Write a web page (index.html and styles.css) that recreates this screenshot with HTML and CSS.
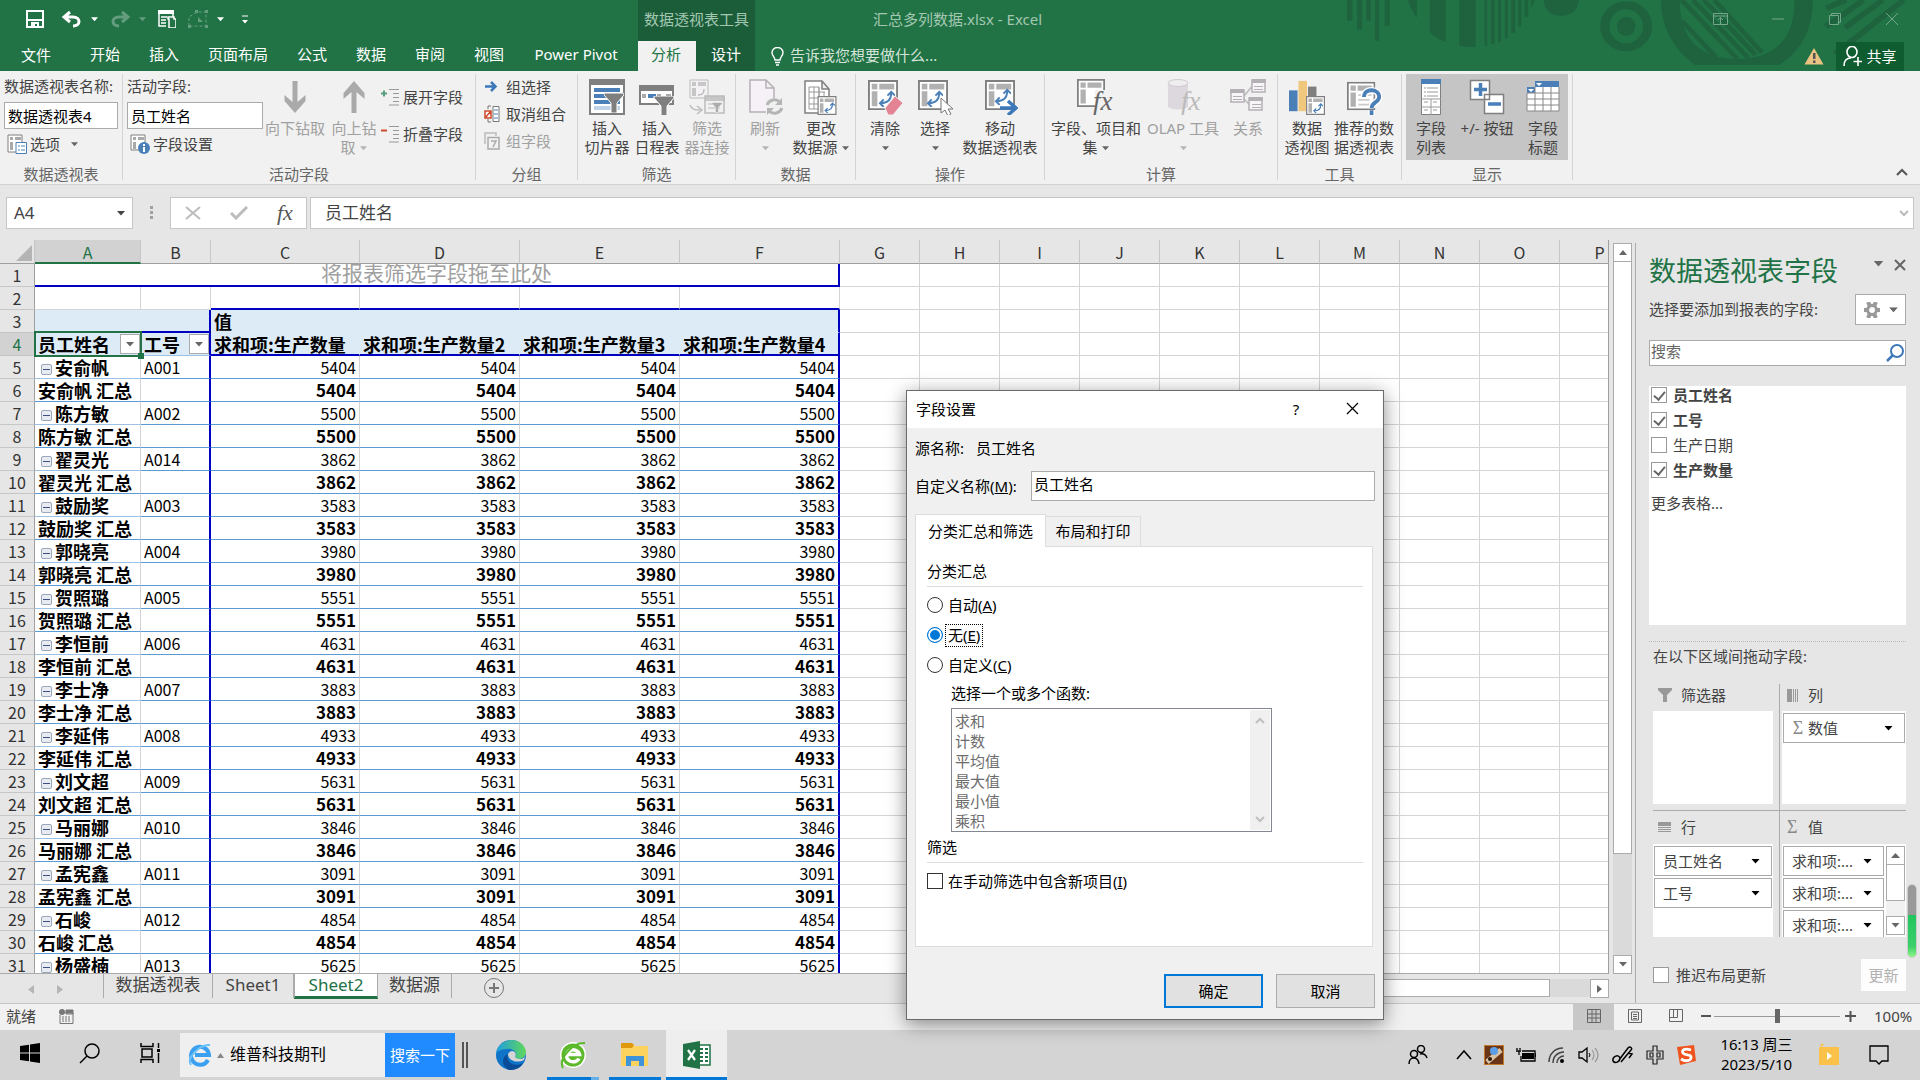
FILE: index.html
```html
<!DOCTYPE html>
<html lang="zh-CN">
<head>
<meta charset="utf-8">
<title>汇总多列数据.xlsx - Excel</title>
<link rel="stylesheet" href="styles.css">
</head>
<body>
<svg class="defs" width="0" height="0" aria-hidden="true">
  <symbol id="caret" viewBox="0 0 8 5"><path d="M0 0h8L4 4.500z" fill="currentColor"/></symbol>
  <symbol id="pivot" viewBox="0 0 32 32">
    <path d="M1 1h30v30H1z" fill="#fff" stroke="#7f7f7f" stroke-width="2"/>
    <path d="M4 4h6v6H4zM12 4h16v6H12zM4 12h6v16H4z" fill="#b1b1b1"/>
  </symbol>
  <symbol id="swap" viewBox="0 0 18 18">
    <path d="M3 14c7 0 11-3 11-11M10 6l4-4 4 4M6 10l-4 4 4 4" fill="none" stroke="#4a7fb8" stroke-width="2"/>
  </symbol>
  <symbol id="funnel" viewBox="0 0 20 20"><path d="M0 0h20v2l-7 8v10H7V10L0 2z" fill="#7f7f7f" stroke="#fff"/></symbol>
</svg>

<header class="title-area">
  <svg class="decor" viewBox="0 0 600 71" aria-hidden="true">
    <g transform="scale(.3827 .3333)" fill="#1e633e">
      <path d="M71 0h14v62H71zM97 0h13v89H97zM121 0h12v62h-12zM144 0h11v122h-11zM169 0h13v78h-13zM230 0h23v54q-16-25-23-54zM287 0h42v126q-22-8-42-28zM364 0h43v140q-22 2-43-3zM430 0h7v138h-7zM447 0h9v132h-9zM465 0h8v126h-8zM483 0h8v114h-8zM500 0h10v100h-10zM518 0h8v80h-8zM535 0h9v52h-9zM552 0h8q-2 14-8 24z"/>
      <path d="M584 0h93q-6 47-47 47T584 0z"/>
      <ellipse cx="800" cy="79" rx="56" ry="63" fill="none" stroke="#1e633e" stroke-width="24"/>
      <ellipse cx="800" cy="79" rx="24" ry="29"/>
      <path d="M891 0h49q0 175 150 177Q1240 175 1240 0h48q0 130-88 195H980Q891 120 891 0z"/>
      <path d="M945 0l145 176M975 0l143 173M1003 0l135 165M1030 0l125 158M945 62l90 110" stroke="#1e633e" stroke-width="13"/>
      <path d="M1375 0l-52 24M1420 0l-98 80M1470 0l-98 83M1525 0l-180 163" stroke="#1e633e" stroke-width="16"/>
    </g>
  </svg>
  <div class="title-row">
    <div class="quick">
      <svg width="18" height="18" viewBox="0 0 18 18"><path d="M1 1h16v16H1z" fill="none" stroke="#fff" stroke-width="2"/><path d="M2 9h14v2H2zM5 12h8v5h-2v-3H9v3H5z" fill="#fff"/></svg>
      <svg class="q2" width="20" height="18" viewBox="0 0 20 18"><path d="M8 2L2 7l6 5M2 7h9c8 0 8 9 0 9" fill="none" stroke="#fff" stroke-width="3"/></svg>
      <svg class="q3" width="7" height="5"><use href="#caret"/></svg>
      <svg class="q4 dim" width="20" height="18" viewBox="0 0 20 18"><path d="M12 2l6 5-6 5M18 7H9c-8 0-8 9 0 9" fill="none" stroke="#fff" stroke-width="3"/></svg>
      <svg class="q3 dim" width="7" height="5"><use href="#caret"/></svg>
      <svg class="q4" width="18" height="18" viewBox="0 0 18 18"><path d="M0 0h16v4H0z" fill="#fff"/><path d="M1 4v12h7M15 4v3M3 7h6M3 10h5M3 13h5" fill="none" stroke="#fff" stroke-width="1.500"/><path d="M10 7h6v2h2v9h-7V9h-1z" fill="none" stroke="#fff" stroke-width="1.500"/></svg>
      <svg class="q4 dim" width="20" height="18" viewBox="0 0 20 18"><path d="M1 16V7l8-5h9v14H1" fill="none" stroke="#fff" stroke-dasharray="3 2"/><path d="M7 0h3v3H7zM17 0h3v3h-3zM0 15h3v3H0zM17 15h3v3h-3zM10 7l5 5h-5z" fill="#fff"/></svg>
      <svg class="q3" width="7" height="5"><use href="#caret"/></svg>
      <svg class="q5" width="6" height="9" viewBox="0 0 6 9"><path d="M0 1h6" stroke="#fff"/><path d="M0 5h6L3 8.500z" fill="#fff"/></svg>
    </div>
    <div class="tool-title">数据透视表工具</div>
    <div class="doc-title">汇总多列数据.xlsx - Excel</div>
    <div class="win-buttons">
      <button aria-label="功能区显示选项"><svg width="15" height="12" viewBox="0 0 15 12"><path d="M.5.500h14v11H.5zM.5 3h14M7.500 11V5M5 7l2.500-2.500L10 7" fill="none" stroke="currentColor"/></svg></button>
      <button aria-label="最小化"><svg width="12" height="12"><path d="M0 6h12" stroke="currentColor"/></svg></button>
      <button aria-label="还原"><svg width="12" height="12" viewBox="0 0 12 12"><path d="M.5 2.500h9v9h-9zM2.500 2V.5h9v9H10" fill="none" stroke="currentColor"/></svg></button>
      <button aria-label="关闭"><svg width="12" height="12"><path d="M0 0l12 12M12 0L0 12" stroke="currentColor"/></svg></button>
    </div>
  </div>
  <nav class="tabs">
    <button class="file">文件</button><button>开始</button><button>插入</button><button>页面布局</button><button>公式</button><button>数据</button><button>审阅</button><button>视图</button><button class="pp">Power Pivot</button><button class="active">分析</button><button class="tool">设计</button>
    <label class="tell"><svg width="13" height="19" viewBox="0 0 13 19"><path d="M4 13c0-3-3-4-3-7.500a5.500 5 0 0 1 11 0C12 9 9 10 9 13zM4 15.500h5M5 18h3" fill="none" stroke="#fff" stroke-width="1.400"/></svg><input type="text" value="告诉我您想要做什么..." aria-label="告诉我"></label>
    <div class="account">
      <svg width="20" height="18" viewBox="0 0 20 18"><path d="M10 1l9.500 16.500H.5z" fill="#eac282"/><path d="M9 6h2.500v6H9zM9 13.500h2.500V16H9z" fill="#555"/></svg>
      <button class="share"><svg width="19" height="20" viewBox="0 0 19 20"><ellipse cx="9" cy="6" rx="5" ry="5.500" fill="none" stroke="#fff" stroke-width="1.600"/><path d="M1 20c0-5 2-8 7-8M15 11v9M10.500 15.500H19" fill="none" stroke="#fff" stroke-width="1.600"/></svg>共享</button>
    </div>
  </nav>
</header>

<section class="ribbon">
  <div class="group g1">
    <div class="body col">
      <label for="pname">数据透视表名称:</label>
      <input id="pname" type="text" value="数据透视表4">
      <button class="small"><svg width="20" height="20" viewBox="0 0 20 20"><path d="M1 1h14v17H1z" fill="#fff" stroke="#7f7f7f"/><path d="M3 3h3v3H3zM8 3h6v3H8zM3 8h3v8H3z" fill="#aaa"/><path d="M9 8.500h10.500v11H9z" fill="#fff" stroke="#4a7fb8"/><path d="M11 12h2M14 12h4M11 16h2M14 16h4" stroke="#4a7fb8"/></svg>选项 <svg class="car" width="7" height="5"><use href="#caret"/></svg></button>
    </div>
    <div class="cap">数据透视表</div>
  </div>
  <div class="group g2">
    <div class="body">
      <div class="col field">
        <label for="afield">活动字段:</label>
        <input id="afield" type="text" value="员工姓名">
        <button class="small"><svg width="20" height="20" viewBox="0 0 20 20"><path d="M1 1h14v15H1z" fill="#fff" stroke="#7f7f7f"/><path d="M3 3h3v3H3zM8 3h6v3H8zM3 8h3v7H3z" fill="#aaa"/><circle cx="14" cy="14" r="6" fill="#4a7fb8"/><path d="M13 10h2v2h-2zM13 13h2v5h-2z" fill="#fff"/></svg>字段设置</button>
      </div>
      <button class="big off w64"><svg width="28" height="36" viewBox="0 0 28 36"><path d="M11.500 2h5v21l8-7v6L14 34 3.500 22v-6l8 7z" fill="#aaa"/></svg>向下钻取</button>
      <button class="big off w54"><svg width="28" height="36" viewBox="0 0 28 36"><path d="M11.500 34h5V13l8 7v-6L14 2 3.500 14v6l8-7z" fill="#aaa"/></svg><span>向上钻<br>取 <svg class="car" width="7" height="5"><use href="#caret"/></svg></span></button>
      <div class="col expand">
        <button class="small"><svg width="19" height="18" viewBox="0 0 19 18"><path d="M0 5.500h6M3 2.500v6" stroke="#5aa080" stroke-width="2"/><path d="M8 1.500h10M12 5.500h6M12 9.500h6M12 13.500h6M8 17h10" stroke="#999" stroke-width="1.200"/></svg>展开字段</button>
        <button class="small"><svg width="19" height="18" viewBox="0 0 19 18"><path d="M0 5.500h6" stroke="#d0492b" stroke-width="2"/><path d="M8 1.500h10M12 5.500h6M12 9.500h6M12 13.500h6M8 17h10" stroke="#999" stroke-width="1.200"/></svg>折叠字段</button>
      </div>
    </div>
    <div class="cap">活动字段</div>
  </div>
  <div class="group g3">
    <div class="body col rows3">
      <button class="small"><svg width="16" height="18" viewBox="0 0 16 18"><path d="M1 8.500h9M7 4l4.500 4.500L7 13" fill="none" stroke="#3d78b8" stroke-width="2.500"/></svg>组选择</button>
      <button class="small"><svg width="16" height="18" viewBox="0 0 16 18"><path d="M4 1h3M4 1v3M4 17h3M4 17v-3" stroke="#777"/><path d="M9 1.500h6v15H9z" fill="#fff" stroke="#777"/><path d="M10 5h4M10 9h4M10 13h4" stroke="#4a7fb8"/><path d="M1 6h6v7H1zM1 13l6-7" fill="#fff" stroke="#d0492b" stroke-width="1.500"/></svg>取消组合</button>
      <button class="small off"><svg width="16" height="18" viewBox="0 0 16 18"><path d="M1 12V1h11v3" fill="none" stroke="#bbb" stroke-width="1.500"/><path d="M4 5.500h11V17H4zM7 9h5l-3 6" fill="none" stroke="#aaa" stroke-width="1.500"/></svg>组字段</button>
    </div>
    <div class="cap">分组</div>
  </div>
  <div class="group g4">
    <div class="body">
      <button class="big w50"><svg width="36" height="36" viewBox="0 0 36 36"><path d="M1 1h34v34H1z" fill="#fff" stroke="#7f7f7f" stroke-width="2"/><path d="M0 0h36v6H0z" fill="#7f7f7f"/><path d="M5 9h26v4H5zM5 15h26v4H5zM5 21h26v4H5z" fill="#4a7fb8"/><path d="M5 27h26v4H5z" fill="#c0d2e8"/><use href="#funnel" x="15" y="14" width="20" height="20"/></svg><span>插入<br>切片器</span></button>
      <button class="big w50"><svg width="36" height="36" viewBox="0 0 36 36"><path d="M1 7h33v18H1z" fill="#fff" stroke="#7f7f7f" stroke-width="2"/><path d="M0 6h35v6H0z" fill="#7f7f7f"/><path d="M3 15h4v4H3zM18 15h4v4h-4zM27 15h5v4h-5z" fill="#aaa"/><path d="M9 15h8v4H9z" fill="#4a7fb8"/><use href="#funnel" x="14" y="17" width="22" height="20"/></svg><span>插入<br>日程表</span></button>
      <button class="big off w50"><svg width="36" height="36" viewBox="0 0 36 36"><g opacity=".6"><path d="M1 1h18v18H1z" fill="#f6f2f6" stroke="#999"/><path d="M3 3h4v4H3zM9 3h8v4H9zM3 9h4v8H3zM16 17h20v5H16z" fill="#aaa"/><path d="M16 17h19v17H16zM9 16c4 0 6-1 6-6M1 26c2 5 5 5 10 5M8 27l5 4-5 4" fill="none" stroke="#999" stroke-width="1.500"/><path d="M19 25h14M19 29h12" stroke="#999"/><use href="#funnel" x="23" y="23" width="10" height="11"/></g></svg><span>筛选<br>器连接</span></button>
    </div>
    <div class="cap">筛选</div>
  </div>
  <div class="group g5">
    <div class="body">
      <button class="big off w50"><svg width="36" height="36" viewBox="0 0 36 36"><path d="M3 1h16l8 8v24H3zM19 1v8h8" fill="#f6f1f7" stroke="#b5b0b5" stroke-width="1.500"/><path d="M19 19h17v17H19z" fill="#f1f1f1"/><path d="M20 26a8 8 0 0 1 13-3M35 29a8 8 0 0 1-13 3" fill="none" stroke="#b5b5b5" stroke-width="3"/><path d="M35 19v7h-7zM20 36v-7h7z" fill="#b5b5b5"/></svg><span>刷新<br><svg class="car" width="7" height="5"><use href="#caret"/></svg></span></button>
      <button class="big w62"><svg width="36" height="36" viewBox="0 0 36 36"><path d="M2 2h17l7 8v24H2zM19 2v8h7" fill="#fff" stroke="#7f7f7f" stroke-width="1.500"/><path d="M6 8h10v22H6zM6 13h16M6 19h16M6 25h9M11 8v22M16 8v9M21 13v4" fill="none" stroke="#999"/><use href="#pivot" x="14" y="17" width="20" height="19"/><use href="#swap" x="21" y="23" width="11" height="11"/></svg><span>更改<br>数据源 <svg class="car" width="7" height="5"><use href="#caret"/></svg></span></button>
    </div>
    <div class="cap">数据</div>
  </div>
  <div class="group g6">
    <div class="body">
      <button class="big w50"><svg width="36" height="36" viewBox="0 0 36 36"><use href="#pivot" x="1" y="1" width="30" height="30"/><use href="#swap" x="11" y="11" width="17" height="17"/><path d="M18 29l10-12 8 7-10 12h-5z" fill="#e48394" stroke="#f1f1f1"/></svg><span>清除<br><svg class="car" width="7" height="5"><use href="#caret"/></svg></span></button>
      <button class="big w50"><svg width="36" height="36" viewBox="0 0 36 36"><use href="#pivot" x="1" y="1" width="30" height="30"/><use href="#swap" x="9" y="11" width="17" height="17"/><path d="M24 19v15l4-3 3 6 3-2-3-5h5z" fill="#fff" stroke="#777"/></svg><span>选择<br><svg class="car" width="7" height="5"><use href="#caret"/></svg></span></button>
      <button class="big w80"><svg width="36" height="36" viewBox="0 0 36 36"><use href="#pivot" x="3" y="1" width="30" height="30"/><use href="#swap" x="12" y="9" width="17" height="17"/><path d="M18 29h15M26 22l8 7-8 7" fill="none" stroke="#3d78b8" stroke-width="3.500"/></svg><span>移动<br>数据透视表</span></button>
    </div>
    <div class="cap">操作</div>
  </div>
  <div class="group g7">
    <div class="body">
      <button class="big w94"><svg width="38" height="36" viewBox="0 0 38 36"><use href="#pivot" x="0" y="0" width="28" height="28"/><path d="M18 11h20v25H18z" fill="#f1f1f1"/><text x="16" y="31" class="fx">fx</text></svg><span>字段、项目和<br>集 <svg class="car" width="7" height="5"><use href="#caret"/></svg></span></button>
      <button class="big off w80"><svg width="38" height="36" viewBox="0 0 38 36"><path d="M4 3v25q10 5 20 0V3z" fill="#ddd8dd"/><ellipse cx="14" cy="4" rx="10" ry="3.500" fill="#eee" stroke="#d0cbd0"/><text x="17" y="31" class="fx pale">fx</text></svg><span>OLAP 工具<br><svg class="car" width="7" height="5"><use href="#caret"/></svg></span></button>
      <button class="big off w50"><svg width="36" height="36" viewBox="0 0 36 36"><path d="M14 17l10-12M14 20l8 8" stroke="#bbb" stroke-width="1.500"/><path d="M1 11h13v12H1zM22 1h13v12H22zM19 19h13v12H19z" fill="#f8f5f8" stroke="#b5b0b5" stroke-width="1.500"/><path d="M0 10h14v4H0zM22 0h14v4H22zM19 18h14v4H19zM3 17h9v1H3zM3 20h9v1H3zM24 7h9v1h-9zM24 10h9v1h-9zM22 25h9v1h-9zM22 28h9v1h-9z" fill="#b5b0b5"/></svg><span>关系</span></button>
    </div>
    <div class="cap">计算</div>
  </div>
  <div class="group g8">
    <div class="body">
      <button class="big w50"><svg width="40" height="38" viewBox="0 0 40 38"><path d="M1 12h9v22H1z" fill="#4a7fb8"/><path d="M11 2h9v32h-9z" fill="#efc87e"/><path d="M21 8h9v12h-9z" fill="#7f7f7f"/><use href="#pivot" x="19" y="18" width="20" height="20"/><use href="#swap" x="26" y="25" width="11" height="11"/></svg><span>数据<br>透视图</span></button>
      <button class="big w64"><svg width="36" height="38" viewBox="0 0 36 38"><use href="#pivot" x="0" y="3" width="30" height="30"/><path d="M12 17h14M12 22h12M12 27h14" stroke="#ccc" stroke-width="2"/><path d="M18 19c0-10 16-9 16 0 0 6-8 5-8 12M26 33v5" fill="none" stroke="#fff" stroke-width="7"/><path d="M18 19c0-10 16-9 16 0 0 6-8 5-8 12M26 33v5" fill="none" stroke="#4a7fb8" stroke-width="4"/></svg><span>推荐的数<br>据透视表</span></button>
    </div>
    <div class="cap">工具</div>
  </div>
  <div class="group g9">
    <div class="body on">
      <button class="big w50"><svg width="20" height="36" viewBox="0 0 20 36"><path d="M.5.500h19v35H.5z" fill="#fff" stroke="#7f7f7f"/><path d="M0 0h20v5H0z" fill="#4a7fb8"/><path d="M3 9h2M6 9h11M3 13h2M6 13h11M3 17h2M6 17h11M0 20h20M0 28h20M10 20v16M3 23h4M12 23h4M3 31h4M12 31h4" stroke="#999"/></svg><span>字段<br>列表</span></button>
      <button class="big w62"><svg width="36" height="36" viewBox="0 0 36 36"><path d="M1.500 1.500h19v19h-19zM15.500 15.500h19v19h-19z" fill="#fff" stroke="#7f7f7f" stroke-width="1.500"/><path d="M5 10.500h13M11.500 4v13M19 25h13" stroke="#4a7fb8" stroke-width="3.500"/></svg><span>+/- 按钮</span></button>
      <button class="big w50"><svg width="36" height="36" viewBox="0 0 36 36"><path d="M2 8h32v24H2z" fill="#fff"/><path d="M10 2h24v6H10zM2 8h8v6H2z" fill="#4a7fb8"/><path d="M2 14h32M2 20h32M2 26h32M2 32h32M10 8v24M18 8v24M26 8v24M34 8v24M2 14v18" stroke="#888"/><path d="M11 4h6l-3 3zM3 10h6l-3 3z" fill="#fff"/></svg><span>字段<br>标题</span></button>
    </div>
    <div class="cap">显示</div>
  </div>
  <button class="fold" aria-label="折叠功能区"><svg width="12" height="8" viewBox="0 0 12 8"><path d="M1 7l5-5 5 5" fill="none" stroke="#555" stroke-width="2"/></svg></button>
</section>

<section class="formula">
  <label class="namebox"><input type="text" value="A4" aria-label="名称框"><svg width="8" height="5"><use href="#caret"/></svg></label>
  <svg class="dots" width="3" height="14"><path d="M0 0h3v3H0zM0 5h3v3H0zM0 10h3v3H0z" fill="#a0a0a0"/></svg>
  <div class="fbtns">
    <svg width="16" height="14"><path d="M1 1l14 12M15 1L1 13" stroke="#bcbcbc" stroke-width="2"/></svg>
    <svg width="18" height="14"><path d="M1 7l5 5L17 1" fill="none" stroke="#bcbcbc" stroke-width="3"/></svg>
    <i>fx</i>
  </div>
  <label class="fbox"><input type="text" value="员工姓名" aria-label="编辑栏"><svg width="10" height="7"><path d="M1 1l4 4 4-4" fill="none" stroke="#bbb" stroke-width="2"/></svg></label>
</section>

<main class="work">
  <div class="book">
    <div class="view">
      <div class="grid">
        <table class="sheet">
          <colgroup><col class="c-h"><col class="c-a"><col class="c-b"><col class="c-c"><col class="c-v"><col class="c-v"><col class="c-v"><col span="10" class="c-n"></colgroup>
          <thead><tr><th class="corner"><svg width="16" height="16"><path d="M16 0v16H0z" fill="#b4b4b4"/></svg></th><th class="cur">A</th><th>B</th><th>C</th><th>D</th><th>E</th><th>F</th><th>G</th><th>H</th><th>I</th><th>J</th><th>K</th><th>L</th><th>M</th><th>N</th><th>O</th><th>P</th></tr></thead>
          <tbody id="rows"></tbody>
        </table>
      </div>
      <div class="vscroll"><span class="sb"><svg width="8" height="5"><path d="M0 5h8L4 0z" fill="#666"/></svg></span><span class="thumb"></span><span class="track"></span><span class="sb"><svg width="8" height="5"><use href="#caret"/></svg></span></div>
    </div>
    <div class="sheetbar">
      <div class="nav"><svg width="6" height="9"><path d="M6 0v9L0 4.500z" fill="#b5b5b5"/></svg><svg width="6" height="9"><path d="M0 0v9l6-4.500z" fill="#b5b5b5"/></svg></div>
      <button class="s1">数据透视表</button><button class="s2">Sheet1</button><button class="s3">Sheet2</button><button class="s4">数据源</button>
      <button class="add" aria-label="新工作表"><svg width="20" height="20"><circle cx="10" cy="10" r="9.500" fill="none" stroke="#777"/><path d="M5 10h10M10 5v10" stroke="#777" stroke-width="2"/></svg></button>
      <div class="hscroll"><span class="hthumb"></span><span class="htrack"></span><span class="sb"><svg width="5" height="8"><path d="M0 0v8l5-4z" fill="#666"/></svg></span></div>
    </div>
  </div>
  <aside class="pane">
    <div class="p-head"><h2>数据透视表字段</h2><svg width="11" height="6" viewBox="0 0 8 5"><use href="#caret"/></svg><svg width="12" height="12"><path d="M1 1l10 10M11 1L1 11" stroke="#666" stroke-width="2"/></svg></div>
    <div class="p-sub"><span>选择要添加到报表的字段:</span><button aria-label="工具"><svg width="16" height="16" viewBox="0 0 16 16"><circle cx="8" cy="8" r="4.500" fill="none" stroke="#999" stroke-width="3"/><path d="M4 0l2 4M12 0l-2 4M4 16l2-4M12 16l-2-4M0 8h3M13 8h3" stroke="#999" stroke-width="4"/></svg><svg width="9" height="6" viewBox="0 0 8 5"><use href="#caret"/></svg></button></div>
    <label class="p-search"><input type="text" placeholder="搜索" aria-label="搜索"><svg width="19" height="18" viewBox="0 0 19 18"><circle cx="11" cy="7" r="6" fill="none" stroke="#3d78b8" stroke-width="2"/><path d="M7 11l-6 6" stroke="#3d78b8" stroke-width="2.500"/></svg></label>
    <div class="p-list">
      <label><input type="checkbox" checked><b>员工姓名</b></label>
      <label><input type="checkbox" checked><b>工号</b></label>
      <label><input type="checkbox">生产日期</label>
      <label><input type="checkbox" checked><b>生产数量</b></label>
      <a href="#more">更多表格...</a>
    </div>
    <div class="p-hint">在以下区域间拖动字段:</div>
    <div class="zones">
      <div class="zone"><h3><svg width="14" height="14"><path d="M0 0h14v2L9 7v7H5V7L0 2z" fill="#999"/></svg>筛选器</h3><div class="drop"></div></div>
      <div class="zone r"><h3><svg width="12" height="13"><path d="M0 0h5v13H0zM6 0h1v13H6zM8 0h1v13H8zM10 0h1v13h-1z" fill="#999"/></svg>列</h3><div class="drop"><button><span><i>Σ</i> 数值</span><svg width="9" height="5"><use href="#caret"/></svg></button></div></div>
      <div class="zone b"><h3><svg width="14" height="12"><path d="M0 0h13v4H0zM0 5h13v1H0zM0 7h13v1H0zM0 9h13v1H0z" fill="#999"/></svg>行</h3><div class="drop"><button><span>员工姓名</span><svg width="9" height="5"><use href="#caret"/></svg></button><button><span>工号</span><svg width="9" height="5"><use href="#caret"/></svg></button></div></div>
      <div class="zone r b"><h3><i>Σ</i>值</h3><div class="drop split"><div class="vals"><button><span>求和项:...</span><svg width="9" height="5"><use href="#caret"/></svg></button><button><span>求和项:...</span><svg width="9" height="5"><use href="#caret"/></svg></button><button><span>求和项:...</span><svg width="9" height="5"><use href="#caret"/></svg></button></div><div class="mini"><span class="sb"><svg width="9" height="5"><path d="M0 5h9L4.500 0z" fill="#666"/></svg></span><span class="mthumb"></span><span class="mtrack"></span><span class="sb"><svg width="9" height="5"><use href="#caret"/></svg></span></div></div></div>
    </div>
    <div class="p-foot"><label><input type="checkbox">推迟布局更新</label><button disabled>更新</button></div>
    <span class="meter"></span>
  </aside>

  <section class="dialog" role="dialog" aria-label="字段设置">
    <div class="d-title"><span>字段设置</span><button class="help">?</button><button class="close" aria-label="关闭"><svg width="13" height="13"><path d="M1 1l11 11M12 1L1 12" stroke="#000" stroke-width="1.200"/></svg></button></div>
    <div class="d-body">
      <p class="src">源名称:<span>员工姓名</span></p>
      <div class="d-row"><label for="cname">自定义名称(<u>M</u>):</label><input id="cname" type="text" value="员工姓名"></div>
      <div class="d-tabs"><button class="sel">分类汇总和筛选</button><button>布局和打印</button></div>
      <div class="d-panel">
        <h4>分类汇总</h4>
        <label class="opt"><input type="radio" name="sub"><span>自动(<u>A</u>)</span></label>
        <label class="opt"><input type="radio" name="sub" checked><span class="focus">无(<u>E</u>)</span></label>
        <label class="opt"><input type="radio" name="sub"><span>自定义(<u>C</u>)</span></label>
        <label class="fl" for="funcs">选择一个或多个函数:</label>
        <div class="listbox"><select id="funcs" multiple disabled size="6"><option>求和</option><option>计数</option><option>平均值</option><option>最大值</option><option>最小值</option><option>乘积</option></select><div class="lscroll"><svg width="10" height="7"><path d="M1 6l4-4 4 4" fill="none" stroke="#bfbfbf" stroke-width="2"/></svg><svg width="10" height="7"><path d="M1 1l4 4 4-4" fill="none" stroke="#bfbfbf" stroke-width="2"/></svg></div></div>
        <h4 class="second">筛选</h4>
        <label class="opt chk"><input type="checkbox"><span>在手动筛选中包含新项目(<u>I</u>)</span></label>
      </div>
      <div class="d-foot"><button class="ok">确定</button><button>取消</button></div>
    </div>
  </section>
</main>

<footer class="status">
  <span>就绪</span>
  <svg width="16" height="15" viewBox="0 0 16 15"><circle cx="4" cy="3" r="3" fill="#777"/><path d="M2 6v8.500h13V4H7M8 1h7v4H8z" fill="none" stroke="#777"/><path d="M8 1h7v3H8z" fill="#777"/><path d="M4 8h9M4 10h9M4 12h9" stroke="#777" stroke-dasharray="2 1"/></svg>
  <div class="views">
    <button class="sel" aria-label="普通"><svg width="14" height="14"><path d="M.5.500h13v13H.5zM.5 5h13M.5 9h13M5 .5v13M9 .5v13" fill="none" stroke="#666"/></svg></button>
    <button aria-label="页面布局"><svg width="14" height="14"><path d="M.5.500h13v13H.5zM3.500 3h7v8h-7zM5 5.500h4M5 7.500h4M5 9.500h4" fill="none" stroke="#666"/></svg></button>
    <button aria-label="分页预览"><svg width="14" height="14"><path d="M.5.500h13v12H.5zM.5 8.500h8M4.500.500v8M8.500.500v8" fill="none" stroke="#666"/></svg></button>
  </div>
  <svg width="10" height="12"><path d="M0 6h10" stroke="#555" stroke-width="2"/></svg>
  <input class="zoom" type="range" min="0" max="200" value="100" aria-label="缩放">
  <svg width="11" height="12"><path d="M0 6h11M5.500 1v11" stroke="#555" stroke-width="2"/></svg>
  <span class="pct">100%</span>
</footer>

<footer class="taskbar">
  <button class="t-60" aria-label="开始"><svg width="20" height="20" viewBox="0 0 20 20"><path d="M0 3l9-1.200v7.700H0zM10 1.600L20 0v9.500H10zM0 10.500h9v7.700L0 17zM10 10.500h10V20l-10-1.600z"/></svg></button>
  <button class="t-60" aria-label="搜索"><svg width="22" height="22" viewBox="0 0 22 22"><circle cx="13" cy="9" r="7" fill="none" stroke="#000" stroke-width="1.500"/><path d="M8 14l-7 7" stroke="#000" stroke-width="1.500"/></svg></button>
  <button class="t-60" aria-label="任务视图"><svg width="21" height="20" viewBox="0 0 21 20"><path d="M1 0v3.500h12V0M2 6h10v8H2zM1 20v-3.500h12V20M18.500 0v5M18.500 10v10" fill="none" stroke="#000" stroke-width="1.500"/><path d="M17 6h3v3h-3z"/></svg></button>
  <div class="t-search"><svg width="24" height="24" viewBox="0 0 24 24"><path d="M20 17a9 9 0 1 1 1-5H7" fill="none" stroke="#3ba0f0" stroke-width="4"/><path d="M3 22C-2 15 12 1 22 2" fill="none" stroke="#6cc2f7" stroke-width="2"/></svg><svg width="7" height="5"><path d="M0 5h7L3.500 0z" fill="#888"/></svg><input type="text" value="维普科技期刊" aria-label="搜索框"><button>搜索一下</button></div>
  <svg class="grip" width="6" height="26"><path d="M1 0v26M5 0v26" stroke="#000" stroke-width="1.200"/></svg>
  <button class="app edge" aria-label="Edge"><svg width="30" height="30" viewBox="0 0 30 30"><defs><linearGradient id="eg"><stop offset="0" stop-color="#1f9de0"/><stop offset="1" stop-color="#5fd85a"/></linearGradient></defs><circle cx="15" cy="15" r="15" fill="#0f74c8"/><path d="M0 13C3-4 28-4 30 12c0 7-9 9-11 5 3-5-3-9-8-8-5 0-9 2-11 4z" fill="url(#eg)"/><path d="M12 14c-3 8 6 14 15 9-3 6-9 7-13 7-9-3-9-13-2-16z" fill="#0c4c97"/><path d="M19 17c3-5-4-9-7-3 0 6 8 10 16 6l2-7c0 6-7 8-11 4z" fill="#d5d5d5"/></svg></button>
  <button class="app run multi" aria-label="360"><svg width="28" height="28" viewBox="0 0 28 28"><circle cx="14" cy="14" r="13" fill="#fff"/><circle cx="14" cy="14" r="11.500" fill="#5cb92c"/><path d="M20 17.500a6.500 6 0 1 1 .5-4H9" fill="none" stroke="#fff" stroke-width="3.500"/><path d="M4 27C-1 18 14 1 26 2" fill="none" stroke="#5cb92c" stroke-width="2"/></svg></button>
  <button class="app run" aria-label="文件资源管理器"><svg width="28" height="24" viewBox="0 0 28 24"><path d="M0 1h12l2 2h13v20H0z" fill="#fcd35e"/><path d="M0 0h11l2 2-2 3H0z" fill="#e0980c"/><path d="M5 13h18v10h-5v-5h-8v5H5z" fill="#3f93d8"/></svg></button>
  <button class="app run cur" aria-label="Excel"><svg width="28" height="28" viewBox="0 0 28 28"><path d="M14 4h13v20H14z" fill="#fff" stroke="#217346" stroke-width="1.500"/><path d="M17 8h3M22 8h3M17 12h3M22 12h3M17 16h3M22 16h3M17 20h3M22 20h3" stroke="#217346" stroke-width="2"/><path d="M0 3l17-3v28L0 25z" fill="#217346"/><path d="M5 9l7 10M12 9L5 19" stroke="#fff" stroke-width="2.200"/></svg></button>
  <div class="tray">
    <svg class="people" width="20" height="20" viewBox="0 0 20 20"><circle cx="13" cy="4" r="3.500" fill="none" stroke="#000" stroke-width="1.500"/><circle cx="6" cy="9" r="3.500" fill="none" stroke="#000" stroke-width="1.500"/><path d="M1 19c0-8 9-8 10 0M12 9c4-1 6 1 7 4" fill="none" stroke="#000" stroke-width="1.500"/></svg>
    <svg width="16" height="20"><path d="M1 14l7-8 7 8" fill="none" stroke="#000" stroke-width="1.500"/></svg>
    <svg width="20" height="20"><path d="M0 0h20v20H0z" fill="#c27a2a"/><path d="M1 1h18v18H1z" fill="#6b3518"/><path d="M3 17L17 5" stroke="#d9c3a4" stroke-width="5"/><circle cx="10" cy="6" r="4" fill="#5c9fe8"/><circle cx="6" cy="14" r="2" fill="#2c1710"/></svg>
    <svg width="20" height="20"><path d="M6 8h12v6H6z"/><path d="M6 6h13v10H5v-5M19 9h1v3M1 3v2M4 3v2M0 6h5M3 6v4" fill="none" stroke="#000" stroke-width="1.300"/></svg>
    <svg width="18" height="20"><path d="M1 17C1 9 7 3 15 3M5 18c0-7 5-11 11-11M9 18c0-4 3-7 7-7" fill="none" stroke="#444" stroke-width="1.500"/><circle cx="14" cy="16" r="2"/></svg>
    <svg width="22" height="20"><path d="M1 7h3l5-4v14l-5-4H1z" fill="none" stroke="#000" stroke-width="1.300"/><path d="M11 8q2 2 0 4" fill="none" stroke="#000"/><path d="M14 5q4 5 0 10M17 3q6 7 0 14" fill="none" stroke="#999" stroke-width="1.200"/></svg>
    <svg width="22" height="20"><path d="M1 16c-1-5 6-7 7-3 0 4-5 6-7 3M7 15L16 3c2-2 5 0 3 2L9 17M16 8l4 1-3 4" fill="none" stroke="#000" stroke-width="1.500"/></svg>
    <svg width="18" height="20"><path d="M1 6h6V1h4v5h6v8h-6v5H7v-5H1zM4 8h3v4H4zM11 8h3v4h-3z" fill="none" stroke="#222" stroke-width="1.200"/></svg>
    <svg class="sogou" width="20" height="20" viewBox="0 0 20 20"><path d="M1 2l17-2 2 16-16 4z" fill="#f0541e"/><path d="M15 5C9 3 5 5 7 8s9 1 8 5-7 3-10 1" fill="none" stroke="#fff" stroke-width="2.800"/></svg>
    <div class="clock">16:13 周三<br>2023/5/10</div>
    <svg width="22" height="24"><path d="M1 4h20v18H1z" fill="#fbc249"/><path d="M9 9l5 4-5 4z" fill="#fff"/><circle cx="4" cy="2" r="1.500" fill="#fbc249"/></svg>
    <svg class="note" width="20" height="20"><path d="M1 1h18v15h-6l-3 3-3-3H1z" fill="none" stroke="#000" stroke-width="1.300"/></svg>
  </div>
</footer>
<script src="script.js"></script>
</body>
</html>
```
FILE: styles.css
```css
* { box-sizing: border-box; }
html, body { height: 100%; }
body {
  margin: 0; display: flex; flex-direction: column; overflow: hidden;
  font: 15px/19px "Noto Sans", "Noto Sans CJK SC", sans-serif; color: #444; background: #e6e6e6;
}
.defs { position: absolute; }
button, input, select { font: inherit; color: inherit; margin: 0; border-radius: 0; }
button { background: none; border: 0; padding: 0; white-space: nowrap; }
input { min-width: 0; }
svg { flex: none; }
h2, h3, h4, p { margin: 0; font-weight: 400; }

/* title and tabs */
.title-area { position: relative; height: 71px; flex: none; background: #217346; color: #fff; }
.decor { position: absolute; right: 0; top: 0; width: 600px; height: 71px; }
.title-row { position: relative; display: flex; height: 41px; }
.quick { width: 638px; display: flex; align-items: center; padding: 0 0 3px 26px; }
.q2 { margin-left: 18px; } .q3 { margin-left: 9px; } .q4 { margin-left: 12px; } .q5 { margin-left: 18px; }
.dim { opacity: .3; }
.tool-title { width: 117px; background: #1b5d39; color: #a3c7b1; text-align: center; line-height: 39px; }
.doc-title { flex: 1; padding-left: 118px; line-height: 38px; color: #a3c7b1; }
.win-buttons { display: flex; color: #75a88a; }
.win-buttons button { width: 57px; height: 38px; }
.tabs { position: relative; display: flex; height: 30px; }
.tabs > button { padding: 0 14px 4px 15px; }
.tabs > .file { width: 72px; margin-right: 3px; padding: 0 0 2px; }
.tabs > .pp { width: 120px; padding: 0 4px 4px 0; }
.tabs > .active { width: 58px; background: #f1f1f1; color: #217346; padding-left: 12px; }
.tabs > .tool { width: 59px; background: #1b5d39; }
.tell { display: flex; align-items: center; gap: 6px; padding-left: 16px; flex: 1; }
.tell input { background: none; border: 0; padding: 0 0 1px; width: 240px; color: #d3e3d9; }
.account { display: flex; align-items: center; gap: 12px; padding-right: 16px; }
.share { display: flex; align-items: center; justify-content: center; gap: 4px; width: 68px; height: 29px; background: #0e5c2f; }

/* ribbon */
.ribbon { display: flex; flex: none; height: 114px; padding: 3px 0 4px; background: #f1f1f1; border-bottom: 1px solid #d2d2d2; }
.group { display: flex; flex-direction: column; border-right: 1px solid #d4d4d4; padding: 0 4px; }
.body { display: flex; height: 86px; flex: none; padding-top: 3px; }
.cap { color: #666; text-align: center; line-height: 20px; padding-top: 4px; height: 20px; }
.col { display: flex; flex-direction: column; align-items: flex-start; }
.col input { height: 27px; width: 100%; border: 1px solid #ababab; background: #fff; padding: 0 3px; color: #000; margin: 6px 0 5px; }
.g1 { width: 123px; } .g2 { width: 353px; } .g3 { width: 102px; } .g4 { width: 158px; } .g5 { width: 120px; }
.g6 { width: 189px; } .g7 { width: 233px; } .g8 { width: 124px; } .g9 { width: 171px; }
.g1 .col, .field { white-space: nowrap; }
.g1 .small, .field .small { padding-left: 3px; }
.field { width: 136px; }
.small { display: flex; align-items: center; gap: 3px; height: 20px; }
.car { margin-left: 1px; vertical-align: middle; color: #666; }
.small .car { margin-left: 8px; }
.big { display: flex; flex-direction: column; align-items: center; flex: none; }
.big > svg { height: 36px; margin: 2px 0 4px; }
.off { color: #a0a0a0; } .off .car { color: #b5b5b5; }
.w50 { width: 50px; } .w54 { width: 54px; } .w62 { width: 62px; } .w64 { width: 64px; } .w80 { width: 80px; } .w94 { width: 94px; }
.expand { padding: 10px 0 0; gap: 17px; }
.rows3 { gap: 7px; padding-left: 4px; }
.rows3 .small { gap: 6px; }
.on { background: #c5c5c5; }
.fx { font: italic 27px "Liberation Serif", serif; fill: #666; }
.pale { fill: #bbb; }
.fold { margin-left: auto; width: 36px; align-self: flex-end; }

/* formula bar */
.formula { display: flex; flex: none; height: 55px; padding: 12px 6px 11px; align-items: stretch; font-size: 17px; }
.formula label { display: flex; align-items: center; background: #fff; border: 1px solid #c6c6c6; }
.formula input { border: 0; background: none; padding: 0 0 2px; flex: 1; color: #444; }
.namebox { width: 127px; padding: 0 7px; }
.dots { margin: 9px 17px 0; }
.fbtns { display: flex; align-items: center; gap: 29px; width: 137px; padding-left: 14px; background: #fff; border: 1px solid #c6c6c6; margin-right: 3px; }
.fbtns i { font: italic 22px "Liberation Serif", serif; color: #555; }
.formula .fbox { flex: 1; padding: 0 4px 0 14px; }

/* workbook */
.work { position: relative; flex: 1; min-height: 0; display: flex; }
.book { flex: 1; min-width: 0; display: flex; flex-direction: column; }
.view { flex: 1; min-height: 0; display: flex; }
.grid { flex: 1; min-width: 0; overflow: hidden; border-right: 1px solid #9f9f9f; border-bottom: 1px solid #ababab; background: #fff; }
.sheet { table-layout: fixed; width: 1640px; border-collapse: separate; border-spacing: 0; font: 16px/20px "Noto Sans CJK SC", sans-serif; color: #000; }
.c-h { width: 35px; } .c-a { width: 106px; } .c-b { width: 70px; } .c-c { width: 149px; } .c-v { width: 160px; } .c-n { width: 80px; }
.sheet th { background: #e6e6e6; font-weight: 400; color: #333; padding: 0; height: 23px; border-right: 1px solid #c6c6c6; border-bottom: 1px solid #9f9f9f; }
.sheet thead th { height: 24px; padding-top: 1px; }
.sheet tbody th { border-right-color: #9f9f9f; border-bottom-color: #c6c6c6; text-align: center; }
.sheet .corner { text-align: right; padding: 0; }
.corner svg { display: block; margin: 3px 2px 0 auto; }
.sheet .cur { background: #d2d2d2; color: #217346; }
.sheet thead .cur { border-bottom: 2px solid #217346; }
.sheet td { height: 23px; padding: 0 3px 1px; border-right: 1px solid #d4d4d4; border-bottom: 1px solid #d4d4d4; white-space: nowrap; line-height: 20px; }
.sheet .zone1 { border-right: 2px solid #0000c0; border-bottom: 2px solid #0000c0; text-align: center; color: #a0a0a0; font-size: 21px; line-height: 17px; padding-bottom: 4px; }
.sheet .head { background: #ddebf7; border-right-color: #ddebf7; border-bottom-color: #ddebf7; font-weight: 700; font-size: 18px; padding-bottom: 0; }
.sheet .top { border-bottom: 2px solid #0000c0; }
.sheet .edge-r { border-right: 2px solid #0000c0; }
.sheet .line { border-bottom: 1px solid #5b9bd5; }
.sheet .soft { border-bottom: 1px solid #9bc2e6; }
.sheet .name { font-weight: 700; font-size: 18px; }
.sheet .num { text-align: right; padding-right: 3px; }
.sheet .sum { font-weight: 700; font-size: 17px; }
.box { display: inline-block; width: 11px; height: 11px; margin: 0 3px 1px; border: 1px solid #9ba7bb; border-radius: 2px; background: linear-gradient(#3c4f80, #3c4f80) center / 7px 1px no-repeat #e8ecf2; vertical-align: middle; }
.flt { display: flex; align-items: center; justify-content: space-between; }
.flt button { width: 20px; height: 20px; margin-right: -3px; border: 1px solid #ababab; background: #fff; color: #666; display: flex; align-items: center; justify-content: center; }
.sheet .here { position: relative; }
.here::after { content: ""; position: absolute; inset: -2px -2px -2px -1px; border: 2px solid #217346; }
.here::before { content: ""; position: absolute; right: -4px; bottom: -4px; width: 6px; height: 6px; background: #217346; z-index: 1; }
.vscroll { width: 26px; padding: 3px 3px 0 4px; display: flex; flex-direction: column; background: #e6e6e6; }
.sb { display: flex; align-items: center; justify-content: center; flex: none; width: 19px; height: 19px; background: #fff; border: 1px solid #ababab; color: #666; }
.thumb { flex: 594; background: #fff; border: 1px solid #ababab; border-top: 0; }
.track { flex: 101; background: #dadada; }
.sheetbar { display: flex; height: 29px; flex: none; font-size: 17px; padding-right: 26px; }
.nav { width: 104px; display: flex; gap: 23px; padding: 11px 0 0 28px; border-right: 1px solid #ababab; height: 24px; }
.sheetbar > button { height: 24px; padding-bottom: 3px; border-right: 1px solid #ababab; }
.s1 { width: 109px; } .s2 { width: 81px; }
.sheetbar > .s3 { width: 84px; height: 25px; background: #fff; color: #217346; border: 1px solid #ababab; border-top: 0; border-bottom: 3px solid #217346; padding-bottom: 1px; }
.s4 { width: 74px; }
.sheetbar > .add { width: 84px; border: 0; height: 29px; padding: 2px 0 0; }
.hscroll { flex: 1; margin-left: 400px; padding-top: 5px; display: flex; }
.hthumb { flex: 615; background: #fff; border: 1px solid #ababab; height: 18px; }
.htrack { flex: 40; background: #dadada; height: 18px; }

/* field list pane */
.pane { position: relative; width: 285px; flex: none; border-left: 1px solid #ababab; margin-top: 3px; padding: 10px 14px 0 13px; display: flex; flex-direction: column; }
.p-head { display: flex; height: 36px; color: #666; }
.p-head h2 { flex: 1; font-size: 27px; line-height: 36px; color: #217346; }
.p-head svg { margin: 8px 0 0 10px; }
.p-head svg + svg { margin-top: 6px; }
.p-sub { display: flex; justify-content: space-between; align-items: center; margin-top: 5px; height: 31px; }
.p-sub button { width: 51px; height: 31px; border: 1px solid #ababab; background: #fff; display: flex; align-items: center; justify-content: center; gap: 9px; color: #666; }
.p-search { display: flex; align-items: center; height: 26px; margin-top: 15px; border: 1px solid #ababab; background: #fff; }
.p-search input { flex: 1; border: 0; padding: 0 1px 3px; background: none; }
.p-search input::placeholder { color: #666; opacity: 1; }
.p-list { height: 239px; margin-top: 20px; padding: 0 2px; background: #fff; }
.p-list label { display: flex; align-items: center; height: 25px; padding-bottom: 7px; gap: 6px; }
.p-list b { font-weight: 600; }
.p-list a { display: block; color: inherit; text-decoration: none; margin-top: 8px; }
.pane input[type=checkbox] { appearance: none; width: 16px; height: 16px; border: 1px solid #999; background: #fff; }
.pane input[type=checkbox]:checked::after { content: ""; display: block; width: 5px; height: 9px; margin: 1px 0 0 4px; border: solid #666; border-width: 0 2px 2px 0; transform: rotate(40deg); }
.p-hint { margin: 16px 0 18px; padding: 5px 0 0 4px; border-top: 1px dotted #bbb; line-height: 19px; }
.zones { display: grid; grid-template-columns: 126px 1fr; margin-left: 4px; }
.zone { padding-right: 6px; }
.zone.r { border-left: 1px solid #ababab; padding: 0 0 0 2px; }
.zone h3 { display: flex; align-items: center; gap: 9px; height: 27px; padding: 0 0 5px 5px; font-size: 15px; }
.zone.b { border-top: 1px solid #ababab; }
.zone.b h3 { height: 33px; padding-bottom: 0; }
.zone i { font: 18px "Liberation Serif", serif; color: #888; width: 12px; display: inline-block; }
.drop { height: 93px; padding: 2px 1px; background: #fff; overflow: hidden; margin-bottom: 6px; }
.zone.b .drop { margin: 0; }
.drop button { display: flex; align-items: center; justify-content: space-between; width: 100%; height: 30px; margin-bottom: 2px; padding: 0 11px 0 8px; border: 1px solid #ababab; background: #fff; }
.drop button svg { color: #000; }
.split { display: flex; gap: 2px; }
.vals { flex: 1; }
.mini { width: 19px; display: flex; flex-direction: column; background: #f1f1f1; }
.mthumb { flex: 36; border: 1px solid #ababab; border-top: 0; background: #fff; }
.mtrack { flex: 15; }
.p-foot { display: flex; justify-content: space-between; align-items: center; margin-top: 22px; padding-left: 4px; }
.p-foot label { display: flex; align-items: center; gap: 7px; }
.p-foot button { width: 45px; height: 32px; background: #fdfdfd; color: #b1b1b1; }
.meter { position: absolute; right: 3px; bottom: 45px; width: 10px; height: 74px; border: 1px solid #ccc; border-radius: 5px; background: linear-gradient(#999 42%, #22c55e 42%, #3bcf6a 85%, #8ef58a); }

/* field settings dialog */
.dialog { position: absolute; left: 906px; top: 150px; width: 478px; background: #f0f0f0; border: 1px solid #6b6b6b; box-shadow: 0 4px 18px rgba(0,0,0,.45); color: #000; z-index: 5; }
.d-title { display: flex; align-items: center; height: 37px; background: #fff; padding-left: 9px; }
.d-title span { flex: 1; }
.help { width: 50px; } .close { width: 62px; }
.d-body { padding: 11px 8px 11px 8px; }
.src span { margin-left: 12px; }
.d-row { display: flex; align-items: center; justify-content: space-between; margin-top: 13px; }
.d-row input { width: 344px; height: 30px; border: 1px solid #ababab; padding: 0 2px 5px; }
.d-tabs { display: flex; align-items: flex-end; margin-top: 13px; }
.d-tabs button { width: 95px; height: 30px; border: 1px solid #dcdcdc; border-width: 1px 1px 0 0; }
.d-tabs .sel { width: 131px; height: 33px; margin-bottom: -1px; background: #fff; border-left-width: 1px; z-index: 1; }
.d-panel { height: 401px; margin-right: 2px; padding: 11px 9px 0 11px; background: #fff; border: 1px solid #dcdcdc; }
.d-panel h4 { height: 29px; padding-top: 4px; border-bottom: 1px solid #dcdcdc; margin-bottom: 3px; font-size: 15px; line-height: 19px; }
.opt { display: flex; align-items: center; height: 30px; gap: 3px; }
.opt span { padding: 1px 2px; }
.opt .focus { outline: 1px dotted #000; }
.opt input { appearance: none; width: 16px; height: 16px; border: 1px solid #333; background: #fff; }
.opt input[type=radio] { border-radius: 50%; }
.opt input:checked { border-color: #0078d7; background: #0078d7; box-shadow: inset 0 0 0 2px #fff; }
.fl { display: block; margin: 4px 0 5px 24px; line-height: 19px; }
.listbox { display: flex; width: 321px; height: 124px; margin-left: 24px; padding: 1px; border: 1px solid #828790; }
.listbox select { flex: 1; border: 0; padding: 0; background: #fff; overflow: hidden; outline: 0; opacity: 1; }
.listbox option { height: 20px; min-height: 20px; line-height: 18px; padding: 0 2px; color: #6d6d6d; }
.lscroll { width: 20px; background: #f0f0f0; display: flex; flex-direction: column; justify-content: space-between; align-items: center; padding: 7px 0; }
.d-panel .second { height: 31px; margin-bottom: 3px; padding-top: 6px; }
.d-foot { display: flex; justify-content: flex-end; gap: 13px; margin-top: 27px; }
.d-foot button { width: 99px; height: 34px; background: #e1e1e1; border: 1px solid #adadad; }
.d-foot .ok { border: 2px solid #0078d7; }

/* status bar */
.status { display: flex; align-items: center; flex: none; height: 27px; background: #f1f1f1; border-top: 1px solid #c6c6c6; padding: 0 7px 2px 6px; }
.status > svg:first-of-type { margin-left: 22px; }
.views { display: flex; margin-left: auto; margin-right: 5px; align-self: stretch; margin-bottom: -2px; }
.views button { width: 41px; }
.views .sel { background: #c8c8c8; }
.zoom { appearance: none; width: 126px; height: 14px; margin: 0 5px 0 3px; background: linear-gradient(#999, #999) center / 100% 1px no-repeat; }
.zoom::-webkit-slider-thumb { appearance: none; width: 5px; height: 14px; background: #666; }
.pct { margin-left: 18px; width: 39px; }

/* taskbar */
.taskbar { display: flex; align-items: center; flex: none; height: 50px; background: #d4d4d4; color: #000; }
.t-60 { width: 60px; }
.t-search { display: flex; align-items: center; width: 275px; height: 44px; background: #efefef; padding-left: 8px; gap: 5px; }
.t-search input { flex: 1; border: 0; background: none; padding: 0 0 2px 1px; font-size: 16px; }
.t-search button { width: 70px; height: 44px; background: #208bff; color: #fff; }
.grip { margin-left: 7px; }
.app { display: flex; align-items: center; justify-content: center; height: 50px; width: 52px; border-bottom: 3px solid transparent; margin-left: 10px; padding-top: 3px; }
.edge { margin-left: 17px; }
.run { border-bottom-color: #0078d7; }
.multi { border-image: linear-gradient(90deg, #0078d7 80%, #66b0e8 80%) 3; }
.run.cur { width: 61px; background: #eee; margin-left: 5px; }
.tray { display: flex; align-items: center; margin-left: auto; gap: 12px; padding-right: 31px; }
.people { margin-right: 16px; }
.clock { width: 77px; line-height: 20px; text-align: center; margin: 0 11px 2px 10px; }
.note { margin-left: 17px; }
```
FILE: script.js
```js
const people = [
  ["安俞帆", "A001", 5404], ["陈方敏", "A002", 5500], ["翟灵光", "A014", 3862], ["鼓励奖", "A003", 3583],
  ["郭晓亮", "A004", 3980], ["贺照璐", "A005", 5551], ["李恒前", "A006", 4631], ["李士净", "A007", 3883],
  ["李延伟", "A008", 4933], ["刘文超", "A009", 5631], ["马丽娜", "A010", 3846], ["孟宪鑫", "A011", 3091],
  ["石峻", "A012", 4854], ["杨盛楠", "A013", 5625]
];
const blank = "<td></td>".repeat(10);
const arrow = '<button aria-label="筛选"><svg width="8" height="5"><use href="#caret"/></svg></button>';
const rows = [
  '<tr><th>1</th><td class="zone1" colspan="6">将报表筛选字段拖至此处</td>' + blank + "</tr>",
  '<tr><th>2</th><td></td><td></td><td class="top"></td><td class="top"></td><td class="top"></td><td class="top"></td>' + blank + "</tr>",
  '<tr><th>3</th><td class="head top"></td><td class="head top edge-r"></td><td class="head">值</td><td class="head"></td><td class="head"></td><td class="head edge-r"></td>' + blank + "</tr>",
  '<tr><th class="cur">4</th><td class="head here"><div class="flt">员工姓名' + arrow + '</div></td><td class="head edge-r soft"><div class="flt">工号' + arrow +
    '</div></td><td class="head top">求和项:生产数量</td><td class="head top">求和项:生产数量2</td><td class="head top">求和项:生产数量3</td><td class="head top edge-r">求和项:生产数量4</td>' + blank + "</tr>"
];
const nums = (n, cls) => [0, 1, 2, 3].map(i => `<td class="num line ${cls}${i === 3 ? " edge-r" : ""}">${n}</td>`).join("");
people.forEach(([name, id, n], i) => {
  const r = 5 + i * 2;
  rows.push(`<tr><th>${r}</th><td class="name soft"><span class="box"></span>${name}</td><td class="line edge-r">${id}</td>${nums(n, "")}${blank}</tr>`);
  if (r < 31) rows.push(`<tr><th>${r + 1}</th><td class="name line">${name} 汇总</td><td class="line edge-r"></td>${nums(n, "sum")}${blank}</tr>`);
});
document.getElementById("rows").innerHTML = rows.join("");
```
